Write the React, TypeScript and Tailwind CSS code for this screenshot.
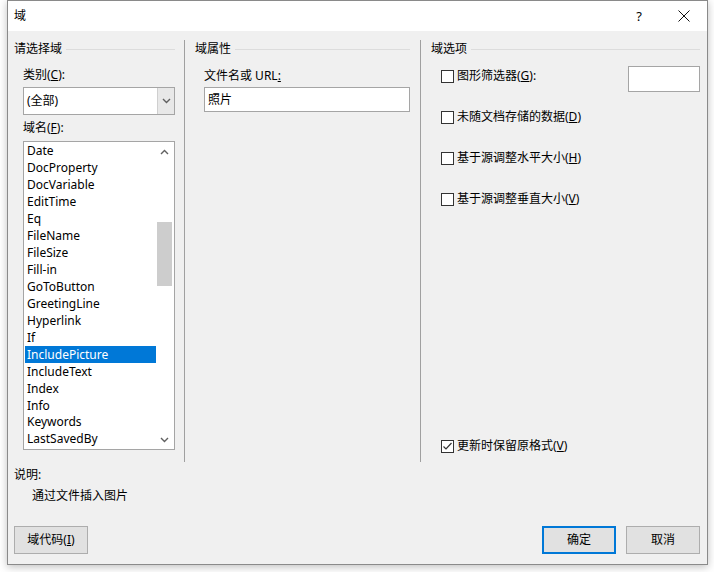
import React from 'react';

const fieldNames = [
  'Date',
  'DocProperty',
  'DocVariable',
  'EditTime',
  'Eq',
  'FileName',
  'FileSize',
  'Fill-in',
  'GoToButton',
  'GreetingLine',
  'Hyperlink',
  'If',
  'IncludePicture',
  'IncludeText',
  'Index',
  'Info',
  'Keywords',
  'LastSavedBy',
];

const font = "font-['Noto_Sans','Noto_Sans_CJK_SC',sans-serif]";

function GroupHeader({ title, className }: { title: string; className?: string }) {
  return (
    <div className={`flex items-center h-[18px] ${className ?? ''}`}>
      <span className="leading-none">{title}</span>
      <div className="flex-1 h-px bg-[#dcdcdc] ml-[4px]" />
    </div>
  );
}

function Chevron({ dir }: { dir: 'up' | 'down' }) {
  return (
    <svg width="9" height="6" viewBox="0 0 9 6" className="block">
      <polyline
        points={dir === 'up' ? '1,5 4.5,1.5 8,5' : '1,1 4.5,4.5 8,1'}
        fill="none"
        stroke="#606060"
        strokeWidth="1.4"
      />
    </svg>
  );
}

function CheckBox({ checked }: { checked?: boolean }) {
  return (
    <div className="w-[13px] h-[13px] border border-[#333] bg-white flex items-center justify-center shrink-0">
      {checked && (
        <svg width="11" height="11" viewBox="0 0 11 11">
          <polyline points="1.5,5.5 4,8 9.5,2" fill="none" stroke="#333" strokeWidth="1.2" />
        </svg>
      )}
    </div>
  );
}

function Option({ children, checked }: { children: React.ReactNode; checked?: boolean }) {
  return (
    <div className="flex items-center h-[20px] gap-[3px]">
      <CheckBox checked={checked} />
      <span className="leading-none">{children}</span>
    </div>
  );
}

function Button({ children, primary }: { children: React.ReactNode; primary?: boolean }) {
  return (
    <button
      className={`w-[74px] h-[28px] bg-[#e1e1e1] flex items-center justify-center leading-none ${
        primary ? 'border-2 border-[#0078d7]' : 'border border-[#adadad]'
      }`}
    >
      {children}
    </button>
  );
}

export default function App() {
  return (
    <div className={`w-[714px] h-[572px] bg-white text-[12px] text-black ${font}`}>
      <div className="ml-[7px] w-[701px] h-[565px] border border-[#8a8a8a] bg-[#f0f0f0] shadow-[0_2px_8px_rgba(0,0,0,0.25)] flex flex-col">
        {/* title bar */}
        <div className="h-[30px] bg-white flex items-center pl-[6px] shrink-0">
          <span className="text-[12px] leading-none">域</span>
          <span className="ml-auto text-[13px] leading-none mr-[36px]">?</span>
          <svg width="12" height="12" viewBox="0 0 12 12" className="mr-[17px]">
            <path d="M0.5 0.5 L11.5 11.5 M11.5 0.5 L0.5 11.5" stroke="#111" strokeWidth="1" />
          </svg>
        </div>

        {/* body */}
        <div className="flex-1 flex flex-col">
          <div className="flex mt-[9px] h-[422px]">
            {/* left column */}
            <div className="w-[177px] border-r border-[#a0a0a0] pl-[6px] pr-[9px]">
              <GroupHeader title="请选择域" />
              <div className="pl-[9px]">
                <div className="mt-[9px] h-[16px] flex items-center leading-none">
                  类别(<u>C</u>):
                </div>
                <div className="mt-[4px] h-[28px] w-[152px] border border-[#a5a5a5] bg-white flex">
                  <div className="flex-1 flex items-center pl-[3px] leading-none">(全部)</div>
                  <div className="w-[17px] bg-[#e8e8e8] border-l border-[#cfcfcf] flex items-center justify-center">
                    <Chevron dir="down" />
                  </div>
                </div>
                <div className="mt-[5px] h-[16px] flex items-center leading-none">
                  域名(<u>F</u>):
                </div>
                <div className="mt-[5px] h-[309px] w-[152px] border border-[#a5a5a5] bg-white flex p-px">
                  <div className="flex-1 flex flex-col">
                    {fieldNames.map((name) => (
                      <div
                        key={name}
                        className={`h-[17px] flex items-center pl-[2px] leading-none ${
                          name === 'IncludePicture' ? 'bg-[#0078d7] text-white' : ''
                        }`}
                      >
                        {name}
                      </div>
                    ))}
                  </div>
                  <div className="w-[17px] flex flex-col items-center">
                    <div className="h-[17px] flex items-center justify-center">
                      <Chevron dir="up" />
                    </div>
                    <div className="flex-1 w-full px-px">
                      <div className="mt-[62px] h-[64px] w-[15px] bg-[#cdcdcd]" />
                    </div>
                    <div className="h-[17px] flex items-center justify-center">
                      <Chevron dir="down" />
                    </div>
                  </div>
                </div>
              </div>
            </div>

            {/* middle column */}
            <div className="w-[236px] border-r border-[#a0a0a0] pl-[10px] pr-[10px]">
              <GroupHeader title="域属性" />
              <div className="pl-[9px]">
                <div className="mt-[10px] h-[16px] flex items-center leading-none">
                  文件名或 URL<u>:</u>
                </div>
                <div className="mt-[3px] h-[25px] border border-[#a5a5a5] bg-white flex items-center pl-[3px] leading-none">
                  照片
                </div>
              </div>
            </div>

            {/* right column */}
            <div className="flex-1 pl-[10px] pr-[7px] pb-[6px] flex flex-col">
              <GroupHeader title="域选项" />
              <div className="pl-[10px] flex flex-col flex-1">
                <div className="mt-[8px] flex items-start">
                  <Option>
                    图形筛选器(<u>G</u>):
                  </Option>
                  <div className="ml-auto w-[72px] h-[26px] border border-[#a5a5a5] bg-white" />
                </div>
                <div className="mt-[15px]">
                  <Option>
                    未随文档存储的数据(<u>D</u>)
                  </Option>
                </div>
                <div className="mt-[21px]">
                  <Option>
                    基于源调整水平大小(<u>H</u>)
                  </Option>
                </div>
                <div className="mt-[21px]">
                  <Option>
                    基于源调整垂直大小(<u>V</u>)
                  </Option>
                </div>
                <div className="mt-auto">
                  <Option checked>
                    更新时保留原格式(<u>V</u>)
                  </Option>
                </div>
              </div>
            </div>
          </div>

          {/* description */}
          <div className="pl-[6px] mt-[5px] h-[16px] flex items-center leading-none">说明:</div>
          <div className="pl-[24px] mt-[5px] h-[16px] flex items-center leading-none">通过文件插入图片</div>

          {/* buttons */}
          <div className="mt-auto flex items-center pl-[6px] pr-[7px] pb-[10px]">
            <Button>
              域代码(<u>I</u>)
            </Button>
            <div className="ml-auto flex gap-[10px]">
              <Button primary>确定</Button>
              <Button>取消</Button>
            </div>
          </div>
        </div>
      </div>
    </div>
  );
}
